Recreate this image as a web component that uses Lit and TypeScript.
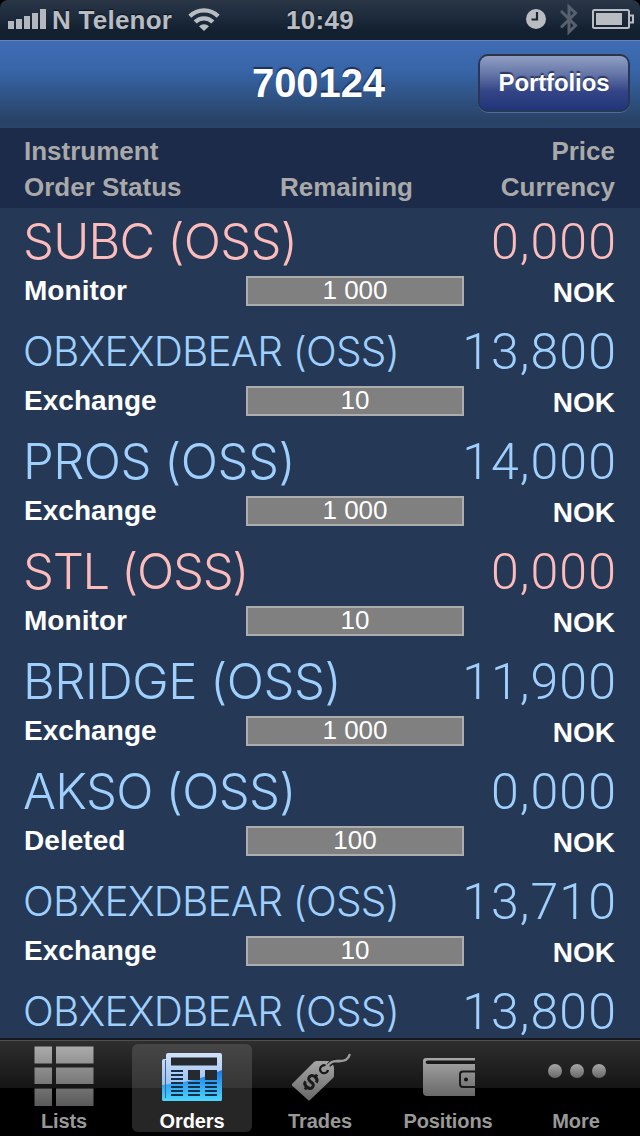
import { LitElement, html, css, svg, nothing } from "lit";
import { customElement, property } from "lit/decorators.js";
import { classMap } from "lit/directives/class-map.js";
import { styleMap } from "lit/directives/style-map.js";

interface Order {
  name: string;
  price: string;
  status?: string;
  remaining?: string;
  side: "sell" | "buy";
  long?: boolean;
  track: number;
}

// The last order peeks out above the tab bar with its title line only.
const ORDERS: Order[] = [
  { name: "SUBC (OSS)", price: "0,000", status: "Monitor", remaining: "1 000", side: "sell", track: -0.75 },
  { name: "OBXEXDBEAR (OSS)", price: "13,800", status: "Exchange", remaining: "10", side: "buy", long: true, track: -0.8 },
  { name: "PROS (OSS)", price: "14,000", status: "Exchange", remaining: "1 000", side: "buy", track: -0.5 },
  { name: "STL (OSS)", price: "0,000", status: "Monitor", remaining: "10", side: "sell", track: -1.3 },
  { name: "BRIDGE (OSS)", price: "11,900", status: "Exchange", remaining: "1 000", side: "buy", track: -0.45 },
  { name: "AKSO (OSS)", price: "0,000", status: "Deleted", remaining: "100", side: "buy", track: -0.7 },
  { name: "OBXEXDBEAR (OSS)", price: "13,710", status: "Exchange", remaining: "10", side: "buy", long: true, track: -0.8 },
  { name: "OBXEXDBEAR (OSS)", price: "13,800", side: "buy", long: true, track: -0.8 },
];

@customElement("status-bar")
class StatusBar extends LitElement {
  static styles = css`
    :host { display: block; height: 40px; background: #000; }
    .bar {
      height: 40px; box-sizing: border-box; border-radius: 8px 8px 0 0;
      background: linear-gradient(#2a3646 0, #1c2a3c 45%, #132030 75%, #132030 100%);
      display: grid; grid-template-columns: 1fr auto 1fr; align-items: center;
      color: #b9bdc2; font: bold 26px/40px "Liberation Sans", Arial, sans-serif;
      padding: 0 7px 0 8px; text-shadow: 0 -1px 1px #0a121c;
    }
    .left, .right { display: flex; align-items: center; }
    .left { letter-spacing: 0.250px; }
    .right { justify-content: flex-end; margin-right: -1px; }
    .signal { margin-right: 6px; }
    .wifi { margin-left: 16px; }
    .time { letter-spacing: 0.300px; margin-left: -1px; }
    .clock { margin-right: 14px; }
    .bt { margin-right: 14px; }
    svg { display: block; flex: none; }
  `;
  render() {
    return html`<div class="bar">
      <div class="left">
        <svg class="signal" width="38" height="40" fill="#b4b8bd">
          <path d="M0 21h6v8H0zM8 19h6v10H8zM16 16h6v13h-6zM24 13h6v16h-6zM32 9h6v20h-6z" />
        </svg>
        <span>N Telenor</span>
        <svg class="wifi" width="32" height="40" fill="none" stroke="#b9bdc2" stroke-width="4.2">
          <path d="M1.8 16.200a20 20 0 0 1 28.4 0M7.2 22a12.4 12.4 0 0 1 17.600 0" />
          <path d="M16 31l-5-4.700a7.300 7.300 0 0 1 10 0z" fill="#b9bdc2" stroke="none" />
        </svg>
      </div>
      <span class="time">10:49</span>
      <div class="right">
        <svg class="clock" width="20" height="40">
          <circle cx="10" cy="19" r="10" fill="#b9bdc2" />
          <path d="M11 12v7.500H5.500" fill="none" stroke="#182436" stroke-width="2.200" />
        </svg>
        <svg class="bt" width="18" height="40" fill="none" stroke="#57616e" stroke-width="3">
          <path d="M1 11l14.500 14.500L9 32V7l6.500 6L1 27.500" />
        </svg>
        <svg width="42" height="40">
          <rect x="1" y="10" width="36" height="18" rx="1.500" fill="none" stroke="#b9bdc2" stroke-width="2" />
          <rect x="4" y="13" width="26" height="12" fill="#b9bdc2" />
          <path d="M38 15.500h3v7h-3" fill="none" stroke="#b9bdc2" stroke-width="2" />
        </svg>
      </div>
    </div>`;
  }
}

@customElement("order-row")
class OrderRow extends LitElement {
  @property({ attribute: false }) order!: Order;
  static styles = css`
    :host { display: block; flex: none; font-family: "Liberation Sans", Arial, sans-serif; }
    .head {
      display: flex; justify-content: space-between; height: 58px; padding: 8px 25px 0 23px;
      font: 300 49px/51px Inter, "Liberation Sans", sans-serif; white-space: nowrap;
    }
    .head.peek { height: 52px; }
    .sell { color: #fdbcbc; }
    .buy { color: #9fd0fd; }
    .name.long { font-size: 40.500px; }
    .price { font: 300 50px/52px Roboto, "Liberation Sans", sans-serif; letter-spacing: 1.100px; margin-right: -2px; }
    .sub {
      display: grid; grid-template-columns: 222px 218px 1fr; height: 44px; padding: 0 25px 0 24px;
      font-weight: bold; font-size: 28px; line-height: 34px; color: #fff; letter-spacing: 0.050px;
    }
    .qty {
      box-sizing: border-box; height: 30px; margin-top: 2px; border: 2px solid #adadad; background: #808080;
      font-size: 26px; font-weight: normal; line-height: 25px; text-align: center; letter-spacing: 0;
    }
    .cur { text-align: right; line-height: 37px; }
  `;
  render() {
    const o = this.order;
    return html`
      <div class=${classMap({ head: true, [o.side]: true, peek: !o.status })}>
        <span class=${classMap({ name: true, long: !!o.long })} style=${styleMap({ letterSpacing: `${o.track}px` })}>${o.name}</span>
        <span class="price">${o.price}</span>
      </div>
      ${o.status ? html`<div class="sub">
        <span>${o.status}</span>
        <div class="qty">${o.remaining}</div>
        <span class="cur">NOK</span>
      </div>` : nothing}`;
  }
}

const gray = svg`<linearGradient id="g" x1="0" y1="0" x2="0" y2="1">
  <stop offset="0" stop-color="#a6a6a6" /><stop offset="1" stop-color="#686868" /></linearGradient>`;

const ICONS = {
  lists: svg`<linearGradient id="lg" gradientUnits="userSpaceOnUse" x1="0" y1="6" x2="0" y2="66">
      <stop offset="0" stop-color="#ababab" /><stop offset="1" stop-color="#5a5a5a" /></linearGradient>
    <path d="M34.500 6.500h17.500v17h-17.500zM56 6.500h37.500v17H56zM34.500 27.500h17.500v16.500h-17.500zM56 27.500h37.500V44H56zM34.500 48.500h17.500v17.500h-17.500zM56 48.500h37.500V66H56z" fill="url(#lg)" />`,
  orders: svg`<defs>
      <linearGradient id="ot" x1="0" y1="0" x2="0" y2="1"><stop offset="0" stop-color="#d2e3fa" /><stop offset="1" stop-color="#7faeea" /></linearGradient>
      <linearGradient id="ob" gradientUnits="userSpaceOnUse" x1="0" y1="30" x2="0" y2="61"><stop offset="0" stop-color="#1c78e8" /><stop offset="1" stop-color="#4cd7fb" /></linearGradient>
    </defs>
    <path d="M38 19h-2q-2 0-2 2v38q0 2 2 2h56q2 0 2-2V15q0-2-2-2H40q-2 0-2 2z" fill="url(#ot)" />
    <path d="M34 45Q65 43 94 30v29q0 2-2 2H36q-2 0-2-2z" fill="url(#ob)" />
    <path d="M37.500 20v38" stroke="#3b6797" stroke-width="1" />
    <path d="M43 17.500h46v8H43zM60 30h12v10H60zM77 30h12v10H77z" fill="#252a30" />
    <path d="M43 31h12M43 35h12M43 39h12M43 43h12M43 47h12M43 51h12M43 55h12M60 43h12M60 47h12M60 51h12M60 55h12M77 43h12M77 47h12M77 51h12M77 55h12" stroke="#12304b" stroke-width="1.800" />`,
  trades: svg`${gray}
    <path d="M36 44L58 22q1-1 3-1h10q2 0 3 1l3 3q1 1 1 3v8q0 1-1 2L54 60q-1 1-2 0L36 45.500z" fill="url(#g)" />
    <path d="M69.500 25.500a4 4 0 1 0 2.500 4.500" fill="none" stroke="#161616" stroke-width="2.200" />
    <path d="M72.500 25.500q3-4 8-4.800" fill="none" stroke="#1c1c1c" stroke-width="4.500" />
    <path d="M72 25.500q3-4.300 8.500-4.500 11 1 13-6" fill="none" stroke="#9b9b9b" stroke-width="2.500" stroke-linecap="round" />
    <g transform="translate(55 42) rotate(40)" fill="none" stroke="#1b1b1b">
      <path d="M4.500-3Q4-6.500 0-6.500-4.500-6.500-4.500-3T0 0 4.500 3 0 6.500-4.500 3" stroke-width="3" />
      <path d="M0-9.500v3M0 6.500v3" stroke-width="2.800" />
    </g>`,
  positions: svg`${gray}
    <path d="M42 18h49v38H43q-4 0-4-4V21q0-3 3-3z" fill="url(#g)" />
    <path d="M91 20.500H43.500a1.500 1.500 0 0 0 0 3.500H91z" fill="#191919" />
    <path d="M91 31.500H79q-3 0-3 3v9.500q0 3 3 3h12" fill="none" stroke="#191919" stroke-width="2" />
    <circle cx="82" cy="39.500" r="2" fill="#111" />`,
  more: svg`${gray}<g fill="url(#g)"><circle cx="43" cy="31" r="7" /><circle cx="65" cy="31" r="7" /><circle cx="87" cy="31" r="7" /></g>`,
};

@customElement("tab-bar")
class TabBar extends LitElement {
  static styles = css`
    :host { display: block; }
    .bar {
      height: 98px; box-sizing: border-box; border-top: 2px solid #161a20; display: flex;
      background: linear-gradient(#4f4f4f 0 1px, #2e2e2e 1px, #151515 48px, #000 48px);
    }
    .tab {
      flex: 1; display: flex; flex-direction: column; align-items: center; color: #999;
      font: bold 20px/24px "Liberation Sans", Arial, sans-serif;
    }
    .icon {
      margin: 4px 4px 0; width: 120px; height: 88px; border-radius: 6px; display: flex;
      flex-direction: column; align-items: center; letter-spacing: -0.100px;
    }
    .active .icon { background: linear-gradient(#464646, #363636 44px, #262626 44px); color: #fff; }
    svg { display: block; margin-top: -4px; height: 69px; width: 128px; flex: none; }
  `;
  render() {
    const tabs = [
      ["Lists", ICONS.lists], ["Orders", ICONS.orders], ["Trades", ICONS.trades],
      ["Positions", ICONS.positions], ["More", ICONS.more],
    ] as const;
    return html`<div class="bar">${tabs.map(([label, icon]) => html`
      <div class=${classMap({ tab: true, active: label === "Orders" })}>
        <div class="icon"><svg viewBox="0 0 128 69">${icon}</svg><span>${label}</span></div>
      </div>`)}</div>`;
  }
}

@customElement("app-root")
class AppRoot extends LitElement {
  static styles = css`
    :host {
      display: flex; flex-direction: column; width: 640px; height: 1136px; overflow: hidden;
      background: #253856; font-family: "Liberation Sans", Arial, sans-serif;
    }
    .nav {
      height: 88px; flex: none; box-sizing: border-box; border-top: 1px solid #6189b4;
      background: linear-gradient(#3f6cb4, #3866a9 32%, #284265 92%, #274369);
      display: grid; grid-template-columns: 1fr 170px 1fr; align-items: center; padding: 0 10px;
    }
    .title {
      grid-column: 2; text-align: center; color: #fff; font-size: 40px; font-weight: bold;
      line-height: 44px; letter-spacing: -0.100px; text-shadow: 0 -2px 1px #1c3152; margin: -3px 3px 0 0;
    }
    .button {
      grid-column: 3; justify-self: end; box-sizing: border-box; width: 152px; height: 58px; border-radius: 10px;
      border: 2px solid #263759; border-top-color: #2d3443; text-align: center; color: #fff;
      font-size: 24px; font-weight: bold; line-height: 53px; letter-spacing: -0.100px; text-shadow: 0 -2px 1px #2b3562;
      background: linear-gradient(#8f9fc3, #6878a9 32%, #344587 65%, #203578); box-shadow: 0 1px 0 #526c94; margin-top: -3px;
    }
    .header {
      height: 80px; flex: none; box-sizing: border-box; background: #1b2b49; color: #a9a9a9;
      font-weight: bold; font-size: 26px; line-height: 36px; padding: 5px 25px 0 24px;
      display: grid; grid-template-columns: 256px 132px 1fr; align-content: start;
    }
    .mid { grid-column: 2; text-align: center; white-space: nowrap; }
    .end { grid-column: 3; text-align: right; }
    .list { flex: 1; min-height: 0; display: flex; flex-direction: column; }
  `;
  render() {
    return html`
      <status-bar></status-bar>
      <div class="nav"><div class="title">700124</div><div class="button">Portfolios</div></div>
      <div class="header">
        <span>Instrument</span><span class="end">Price</span>
        <span>Order Status</span><span class="mid">Remaining</span><span class="end">Currency</span>
      </div>
      <div class="list">${ORDERS.map((o) => html`<order-row .order=${o}></order-row>`)}</div>
      <tab-bar></tab-bar>`;
  }
}
